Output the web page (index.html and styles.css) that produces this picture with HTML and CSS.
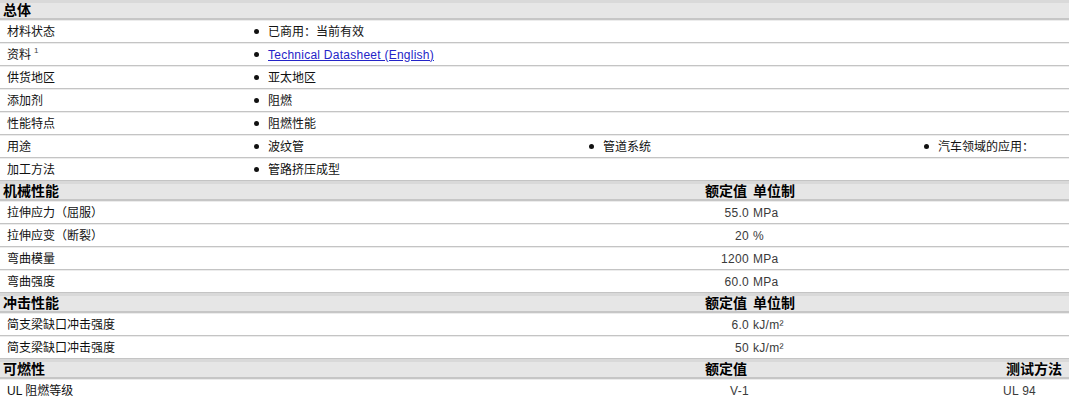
FILE: index.html
```html
<!DOCTYPE html>
<html lang="zh">
<head>
<meta charset="utf-8">
<title>Datasheet</title>
<link rel="stylesheet" href="styles.css">
</head>
<body>
<div class="sheet">
  <div class="head"><span class="h-title">总体</span></div>
  <div class="row gen"><div class="lbl">材料状态</div><div class="item">已商用：当前有效</div></div>
  <div class="row gen"><div class="lbl">资料<sup>1</sup></div><div class="item"><a href="#">Technical Datasheet (English)</a></div></div>
  <div class="row gen"><div class="lbl">供货地区</div><div class="item">亚太地区</div></div>
  <div class="row gen"><div class="lbl">添加剂</div><div class="item">阻燃</div></div>
  <div class="row gen"><div class="lbl">性能特点</div><div class="item">阻燃性能</div></div>
  <div class="row gen"><div class="lbl">用途</div><div class="item">波纹管</div><div class="item">管道系统</div><div class="item">汽车领域的应用：</div></div>
  <div class="row gen"><div class="lbl">加工方法</div><div class="item">管路挤压成型</div></div>

  <div class="head prop"><span class="h-title">机械性能</span><span class="h-val">额定值</span><span class="h-unit">单位制</span></div>
  <div class="row prop"><div class="lbl">拉伸应力（屈服）</div><div class="val">55.0</div><div class="unit">MPa</div></div>
  <div class="row prop"><div class="lbl">拉伸应变（断裂）</div><div class="val">20</div><div class="unit">%</div></div>
  <div class="row prop"><div class="lbl">弯曲模量</div><div class="val">1200</div><div class="unit">MPa</div></div>
  <div class="row prop"><div class="lbl">弯曲强度</div><div class="val">60.0</div><div class="unit">MPa</div></div>

  <div class="head prop"><span class="h-title">冲击性能</span><span class="h-val">额定值</span><span class="h-unit">单位制</span></div>
  <div class="row prop"><div class="lbl">简支梁缺口冲击强度</div><div class="val">6.0</div><div class="unit">kJ/m²</div></div>
  <div class="row prop"><div class="lbl">简支梁缺口冲击强度</div><div class="val">50</div><div class="unit">kJ/m²</div></div>

  <div class="head prop"><span class="h-title">可燃性</span><span class="h-val">额定值</span><span class="h-unit"></span><span class="h-test">测试方法</span></div>
  <div class="row prop"><div class="lbl">UL 阻燃等级</div><div class="val">V-1</div><div class="unit"></div><div class="test">UL 94</div></div>
</div>
</body>
</html>
```
FILE: styles.css
```css
html, body {
  margin: 0;
  padding: 0;
  background: #ffffff;
}
body {
  font-family: "Liberation Sans", "Noto Sans CJK SC", sans-serif;
  font-size: 12px;
  color: #111;
}
.sheet {
  width: 1069px;
}
.head {
  box-sizing: border-box;
  height: 20px;
  background: #e6e6e6;
  border-top: 3px solid #d9d9d9;
  border-bottom: 2px solid #c6c6c6;
  display: grid;
  grid-template-columns: 700px 47px 255px 1fr;
  align-items: end;
  font-weight: bold;
  font-size: 14px;
  line-height: 15px;
  color: #000;
}
.h-title { padding-left: 3px; }
.h-val { text-align: right; }
.h-unit { padding-left: 6px; }
.h-test { text-align: right; padding-right: 7px; }

.row {
  box-sizing: border-box;
  height: 23px;
  border-top: 1px solid #ececec;
  border-bottom: 1px solid #c4c4c4;
  align-items: center;
  line-height: 16px;
}
.row.gen {
  display: grid;
  grid-template-columns: 250px 335px 335px 1fr;
}
.row.prop {
  display: grid;
  grid-template-columns: 700px 49px 253px 1fr;
}
.lbl {
  padding-left: 7px;
  color: #111;
}
.lbl sup {
  font-size: 8px;
  color: #444;
  margin-left: 3px;
  vertical-align: 6px;
  line-height: 0;
}
.item {
  display: flex;
  align-items: center;
  color: #111;
}
.item::before {
  content: "";
  width: 5px;
  height: 5px;
  border-radius: 50%;
  background: #111;
  margin-left: 4px;
  margin-right: 9px;
  flex: none;
}
.item a {
  color: #2424c8;
  text-decoration: underline;
  letter-spacing: 0.25px;
}
.val {
  text-align: right;
  color: #3a3a3a;
  letter-spacing: 0.3px;
}
.unit {
  padding-left: 4px;
  color: #3a3a3a;
  letter-spacing: 0.3px;
}
.test {
  padding-left: 1px;
  color: #3a3a3a;
  letter-spacing: 0.3px;
}
```
